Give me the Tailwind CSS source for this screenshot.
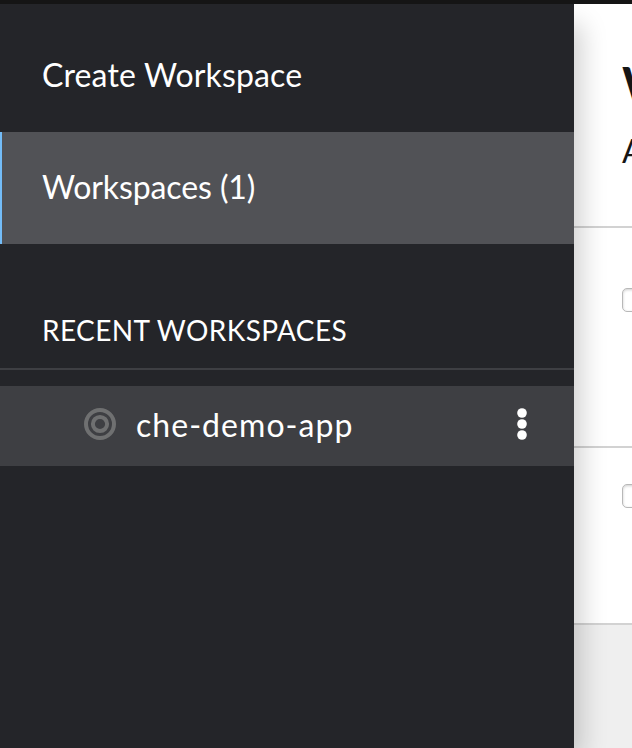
<!DOCTYPE html>
<html lang="en">
<head>
<meta charset="utf-8">
<title>Workspaces</title>
<script src="https://cdn.jsdelivr.net/npm/@tailwindcss/browser@4"></script>
</head>
<body class="w-[632px] h-[748px] overflow-hidden bg-white font-[Lato,sans-serif] text-white flex flex-col">
<header class="h-1 shrink-0 bg-[#151515] relative z-20"></header>
<div class="flex h-[744px]">
  <nav class="w-[574px] shrink-0 bg-[#242529] relative z-10 shadow-[12px_16px_24px_-4px_rgba(3,3,3,0.18)]">
    <a class="flex items-center h-28 mt-4 pb-0.5 pl-[42px] text-[32px] leading-[48px] whitespace-nowrap"><span class="tracking-[0.15px]">Create Workspace</span></a>
    <a class="flex items-center h-28 pb-0.5 border-l-2 border-[#73bcf7] bg-[#515256] pl-10 text-[32px] leading-[48px] whitespace-nowrap"><span class="tracking-[-0.1px]">Workspaces (1)</span></a>
    <h2 class="h-[126px] pt-[65px] pl-[42px] border-b-2 border-[#3e3f43] text-[28px] leading-[42px] whitespace-nowrap"><span class="tracking-[0.4px]">RECENT WORKSPACES</span></h2>
    <div class="mt-4 h-20 pb-1 bg-[#3e3f43] flex items-center pl-[84px] text-[32px] leading-[48px] whitespace-nowrap">
      <svg class="size-8 shrink-0" viewBox="0 0 32 32" fill="none" stroke="#6f7071"><circle cx="16" cy="16" r="14" stroke-width="4"/><circle cx="16" cy="16" r="7.1" stroke-width="4"/></svg>
      <span class="ml-5 mt-0.5 tracking-[1.05px]">che-demo-app</span>
      <svg class="ml-auto mr-[46px] w-3 h-8 shrink-0" viewBox="0 0 12 32" fill="#fff"><circle cx="6" cy="5" r="4.8"/><circle cx="6" cy="16" r="4.8"/><circle cx="6" cy="27" r="4.8"/></svg>
    </div>
  </nav>
  <main class="w-[58px] shrink-0 overflow-hidden text-[#151515] flex flex-col">
    <section class="h-56 shrink-0 border-b-2 border-[#d2d2d2] pt-[49px] pl-12 whitespace-nowrap">
      <h1 class="text-[48px] leading-[62px] font-bold">Workspaces</h1>
      <p class="mt-3 text-[32px] leading-[48px]">A workspace is where your projects live and run.</p>
    </section>
    <section class="h-[220px] shrink-0 border-b-2 border-[#d2d2d2] pt-[60px] pl-12">
      <div class="size-6 rounded-[5px] border border-[#b8b8b8] shadow-[inset_0_1px_3px_rgba(0,0,0,0.2)]"></div>
    </section>
    <section class="h-[177px] shrink-0 border-b-2 border-[#d2d2d2] pt-9 pl-12">
      <div class="size-6 rounded-[5px] border border-[#b8b8b8] shadow-[inset_0_1px_3px_rgba(0,0,0,0.2)]"></div>
    </section>
    <footer class="flex-1 bg-[#efefef]"></footer>
  </main>
</div>
</body>
</html>
